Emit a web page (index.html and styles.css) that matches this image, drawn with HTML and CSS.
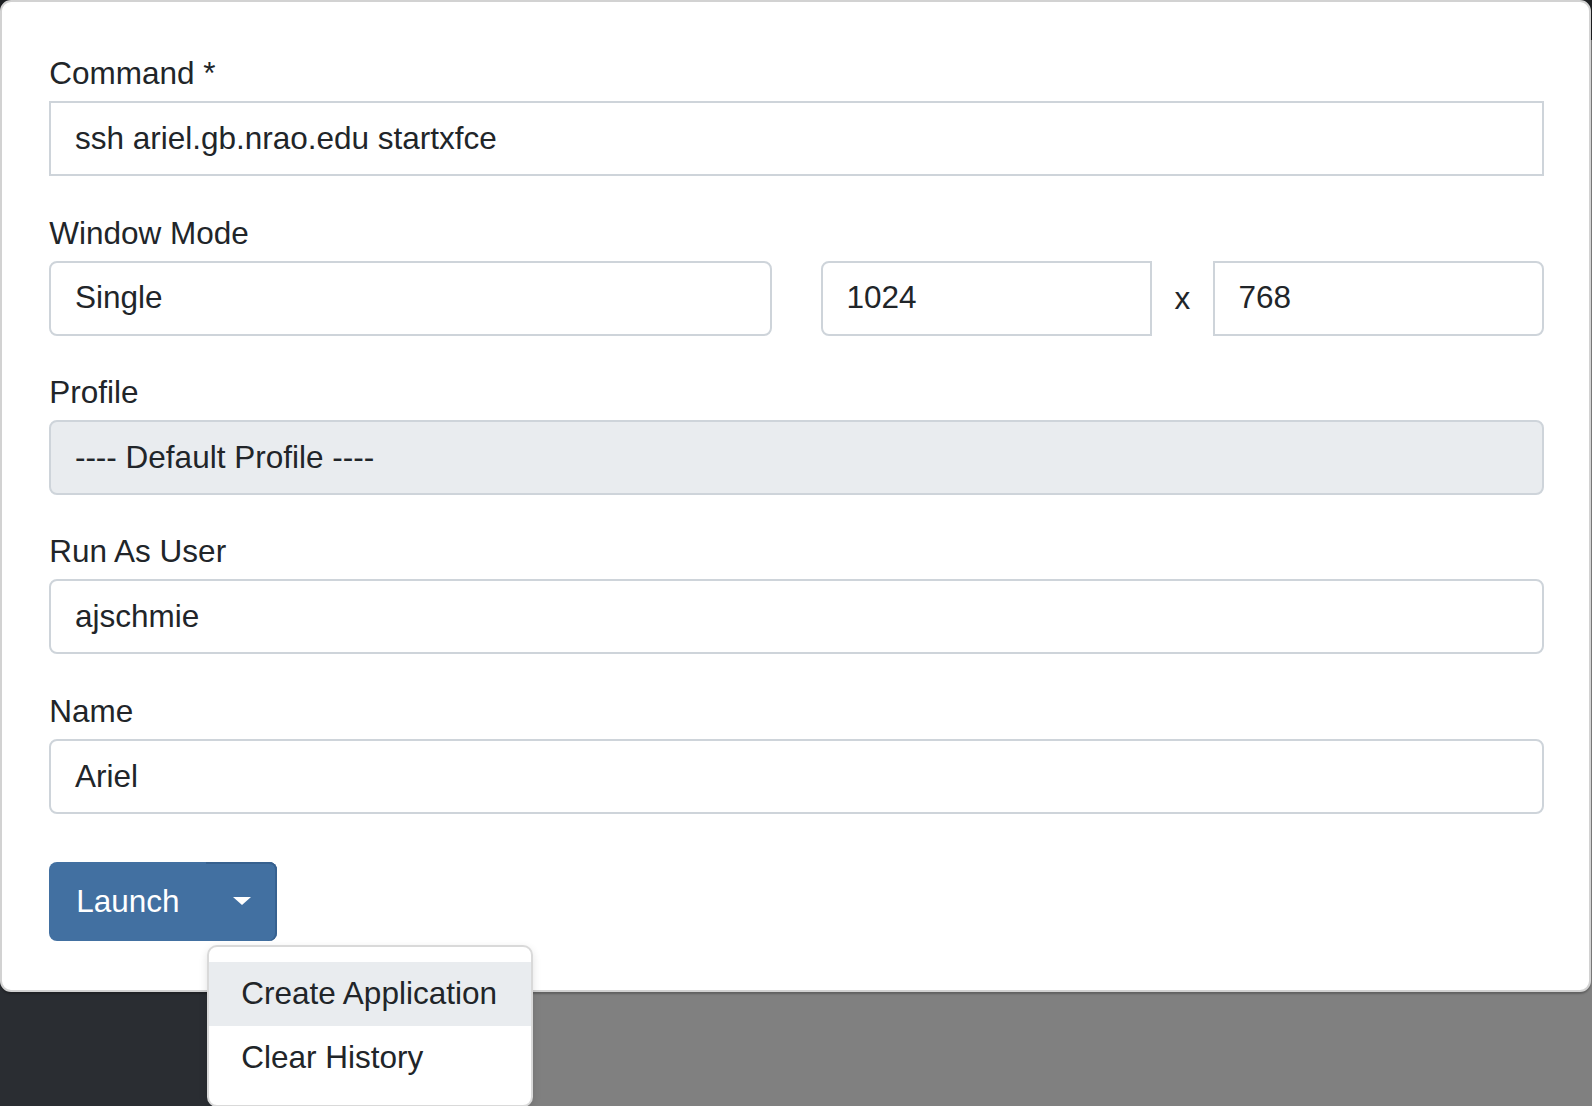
FILE: index.html
```
<!DOCTYPE html>
<html lang="en">
<head>
<meta charset="utf-8">
<title>Launch</title>
<link rel="stylesheet" href="styles.css">
</head>
<body>
<div class="page">
  <div class="card">
    <div class="group">
      <label class="label">Command *</label>
      <div class="field square">ssh ariel.gb.nrao.edu startxfce</div>
    </div>
    <div class="group">
      <label class="label">Window Mode</label>
      <div class="two-cols">
        <div class="field">Single</div>
        <div class="size-group">
          <div class="field left">1024</div>
          <span class="times">x</span>
          <div class="field right">768</div>
        </div>
      </div>
    </div>
    <div class="group">
      <label class="label">Profile</label>
      <div class="field disabled">---- Default Profile ----</div>
    </div>
    <div class="group">
      <label class="label">Run As User</label>
      <div class="field">ajschmie</div>
    </div>
    <div class="group group-last">
      <label class="label">Name</label>
      <div class="field">Ariel</div>
    </div>
    <div class="actions">
      <div class="btn-group">
        <button class="btn main">Launch</button>
        <button class="btn toggle"><span class="caret"></span></button>
        <div class="menu">
          <div class="item active">Create Application</div>
          <div class="item">Clear History</div>
        </div>
      </div>
    </div>
  </div>
  <div class="band">
    <div class="band-dark"></div>
    <div class="band-gray"></div>
  </div>
</div>
</body>
</html>
```
FILE: styles.css
```
html, body {
  margin: 0;
  padding: 0;
}
body {
  width: 1592px;
  height: 1106px;
  overflow: hidden;
  font-family: "Liberation Sans", Arial, Helvetica, sans-serif;
  font-size: 31.5px;
  color: #212529;
  background:
    linear-gradient(to bottom, #1d1f22 0, #1d1f22 40px, transparent 40px),
    linear-gradient(to right, #2a2d32 0, #2a2d32 370px, #808080 370px);
}
.page {
  display: flex;
  flex-direction: column;
  height: 1106px;
}
.card {
  width: 1591px;
  box-sizing: border-box;
  background: #fff;
  border: 2px solid #d2d2d2;
  border-radius: 11px;
  padding: 53.3px 45px 49px 47.3px;
  box-shadow: 0 2px 2px rgba(0, 0, 0, 0.25);
  position: relative;
  z-index: 1;
}
.group {
  display: flex;
  flex-direction: column;
  margin-bottom: 38.5px;
}
.group.group-last {
  margin-bottom: 48px;
}
.label {
  display: block;
  line-height: 36px;
  height: 36px;
  margin-bottom: 10px;
}
.field {
  box-sizing: border-box;
  height: 74.9px;
  line-height: 47.25px;
  padding: 11.8px 23.6px;
  border: 2px solid #ced4da;
  border-radius: 8px;
  background: #fff;
  white-space: nowrap;
}
.field.square {
  border-radius: 0;
}
.field.disabled {
  background: #e9ecef;
}
.two-cols {
  display: grid;
  grid-template-columns: 1fr 1fr;
  column-gap: 48.5px;
}
.size-group {
  display: flex;
  align-items: center;
}
.size-group .field {
  flex: 1 1 0;
}
.field.left {
  border-radius: 8px 0 0 8px;
}
.field.right {
  border-radius: 0 8px 8px 0;
}
.times {
  padding: 0 22.6px;
  line-height: 47.25px;
}
.actions {
  display: flex;
}
.btn-group {
  display: flex;
  position: relative;
}
.btn {
  font: inherit;
  color: #fff;
  background: #4270a1;
  border: none;
  height: 79px;
  line-height: 47.25px;
  margin: 0;
  cursor: pointer;
}
.btn.main {
  width: 157px;
  padding: 0 0 0 27px;
  text-align: left;
  border-radius: 8px 0 0 8px;
}
.btn.toggle {
  width: 71px;
  padding: 0;
  border-radius: 0 8px 8px 0;
  display: flex;
  align-items: center;
  justify-content: center;
  box-shadow: inset 0 2px 0 #37618f, inset -2px 0 0 #37618f;
}
.caret {
  display: block;
  width: 0;
  height: 0;
  border-top: 8px solid #fff;
  border-left: 9px solid transparent;
  border-right: 9px solid transparent;
  margin-top: -1px;
}
.menu {
  position: absolute;
  left: 158px;
  top: calc(100% + 4px);
  width: 326px;
  box-sizing: border-box;
  background: #fff;
  border: 2px solid rgba(0, 0, 0, 0.15);
  border-radius: 10px;
  padding: 15px 0 16px;
  box-shadow: 0 3px 8px rgba(0, 0, 0, 0.12);
  z-index: 5;
}
.item {
  line-height: 47.25px;
  padding: 8.3px 30px 8.3px 32px;
  white-space: nowrap;
}
.item.active {
  background: #e9ecef;
}
.band {
  flex: 1 1 auto;
  display: flex;
}
.band-dark {
  width: 370px;
}
.band-gray {
  flex: 1 1 auto;
}
```
